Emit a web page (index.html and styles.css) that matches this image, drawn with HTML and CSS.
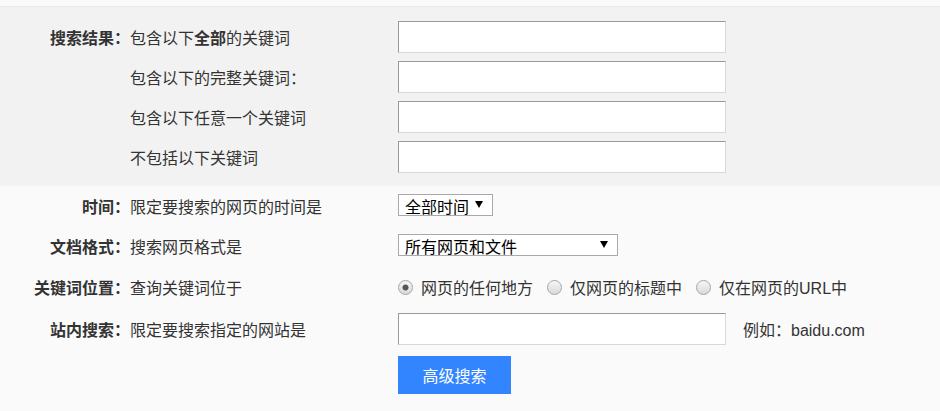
FILE: index.html
```html
<!DOCTYPE html>
<html lang="zh-CN">
<head>
<meta charset="utf-8">
<title>高级搜索</title>
<link rel="stylesheet" href="styles.css">
</head>
<body>
<div class="page">
  <section class="keywords">
    <div class="row">
      <div class="label">搜索结果：</div>
      <div class="desc">包含以下<b>全部</b>的关键词</div>
      <input class="text-input" type="text">
    </div>
    <div class="row">
      <div class="label"></div>
      <div class="desc">包含以下的完整关键词：</div>
      <input class="text-input" type="text">
    </div>
    <div class="row">
      <div class="label"></div>
      <div class="desc">包含以下任意一个关键词</div>
      <input class="text-input" type="text">
    </div>
    <div class="row">
      <div class="label"></div>
      <div class="desc">不包括以下关键词</div>
      <input class="text-input" type="text">
    </div>
  </section>
  <section class="options">
    <div class="row row-time">
      <div class="label">时间：</div>
      <div class="desc">限定要搜索的网页的时间是</div>
      <div class="select-wrap select-time">
        <select class="select"><option>全部时间</option></select>
      </div>
    </div>
    <div class="row row-format">
      <div class="label">文档格式：</div>
      <div class="desc">搜索网页格式是</div>
      <div class="select-wrap select-format">
        <select class="select"><option>所有网页和文件</option></select>
      </div>
    </div>
    <div class="row row-pos">
      <div class="label">关键词位置：</div>
      <div class="desc">查询关键词位于</div>
      <div class="radios">
        <label class="radio-item"><input class="radio" type="radio" name="pos" checked>网页的任何地方</label>
        <label class="radio-item"><input class="radio" type="radio" name="pos">仅网页的标题中</label>
        <label class="radio-item"><input class="radio" type="radio" name="pos">仅在网页的URL中</label>
      </div>
    </div>
    <div class="row row-site">
      <div class="label">站内搜索：</div>
      <div class="desc">限定要搜索指定的网站是</div>
      <input class="text-input" type="text">
      <div class="hint">例如：baidu.com</div>
    </div>
    <div class="row-btn">
      <button class="btn" type="button">高级搜索</button>
    </div>
  </section>
</div>
</body>
</html>
```
FILE: styles.css
```css
html, body {
  margin: 0;
  padding: 0;
  background: #fafafa;
}
body {
  font-family: "Liberation Sans", "Noto Sans CJK SC", sans-serif;
  font-size: 16px;
  color: #333;
}
.page {
  padding-top: 6px;
  height: 405px;
}
.keywords {
  background: #f2f2f2;
  border-top: 1px solid #ebebeb;
  padding: 14px 0 13px;
  display: flex;
  flex-direction: column;
  gap: 8px;
}
.row {
  display: flex;
  align-items: center;
  height: 32px;
}
.label {
  width: 130px;
  flex: none;
  text-align: right;
  font-weight: bold;
}
.desc {
  width: 268px;
  flex: none;
}
.desc b {
  font-weight: bold;
}
.text-input {
  box-sizing: border-box;
  width: 328px;
  height: 32px;
  margin: 0;
  padding: 0 6px;
  background: #fff;
  border-top: 1px solid #999;
  border-left: 1px solid #999;
  border-right: 1px solid #d8d8d8;
  border-bottom: 1px solid #d8d8d8;
  font-size: 16px;
  outline: none;
}
.row-time { height: 40px; }
.row-format { height: 40px; }
.row-pos { height: 42px; }
.row-site { height: 42px; }
.select-wrap {
  position: relative;
  height: 22px;
}
.select-time { width: 95px; margin-top: -2px; }
.select-format { width: 220px; margin-top: -2px; }
.select-wrap::after {
  content: "";
  position: absolute;
  top: 7px;
  right: 10px;
  border-left: 4px solid transparent;
  border-right: 4px solid transparent;
  border-top: 7px solid #000;
  pointer-events: none;
}
.select {
  appearance: none;
  -webkit-appearance: none;
  box-sizing: border-box;
  width: 100%;
  height: 22px;
  margin: 0;
  padding: 4px 0 0 6px;
  border: 1px solid #a9a9a9;
  border-radius: 0;
  background: #fff;
  color: #000;
  font-family: "Liberation Sans", "Noto Sans CJK SC", sans-serif;
  font-size: 16px;
  line-height: 18px;
  outline: none;
}
.radios {
  display: flex;
  align-items: center;
  gap: 14px;
}
.radio-item {
  display: flex;
  align-items: center;
}
.radio {
  appearance: none;
  -webkit-appearance: none;
  box-sizing: border-box;
  width: 15px;
  height: 15px;
  margin: 0 8px 0 0;
  border: 1px solid #a5a5a5;
  border-radius: 50%;
  background: linear-gradient(#f6f6f6, #d9d9d9);
}
.radio:checked {
  background: radial-gradient(circle, #555 0, #555 2.6px, transparent 3.4px), linear-gradient(#f6f6f6, #d9d9d9);
}
.hint {
  padding-left: 17px;
  color: #333;
}
.row-btn {
  padding-left: 398px;
  margin-top: 6px;
}
.btn {
  width: 113px;
  height: 38px;
  border: none;
  margin: 0;
  padding: 0;
  background: #3385ff;
  color: #fff;
  font-family: "Liberation Sans", "Noto Sans CJK SC", sans-serif;
  font-size: 16px;
  cursor: pointer;
}
```
